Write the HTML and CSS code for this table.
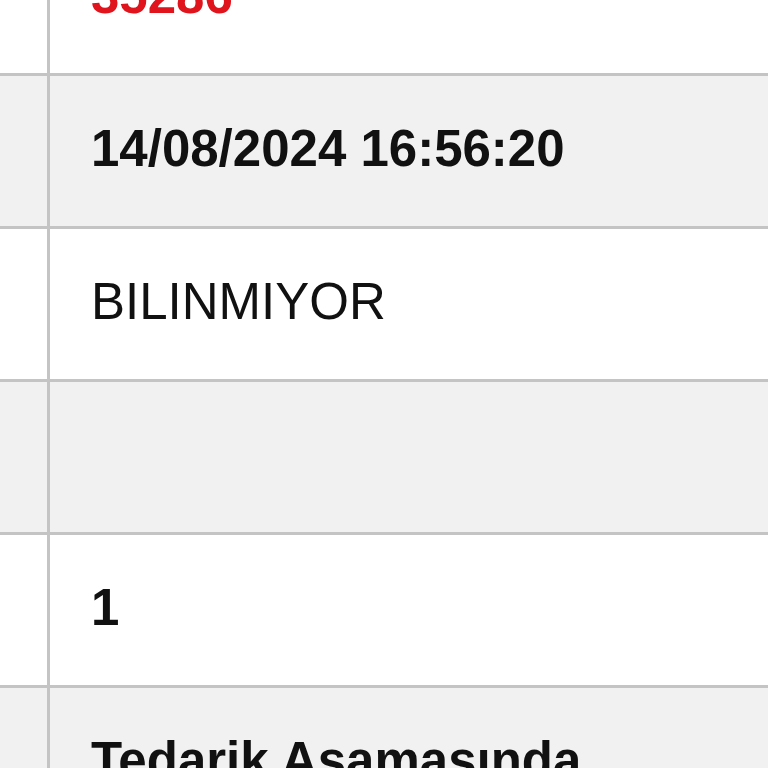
FILE: index.html
```html
<!DOCTYPE html>
<html lang="tr">
<head>
<meta charset="utf-8">
<title>Detay</title>
<link rel="stylesheet" href="styles.css">
</head>
<body>
<div class="table">
  <div class="row">
    <div class="label"></div>
    <div class="value red">35286</div>
  </div>
  <div class="row alt">
    <div class="label"></div>
    <div class="value bold">14/08/2024 16:56:20</div>
  </div>
  <div class="row">
    <div class="label"></div>
    <div class="value">BILINMIYOR</div>
  </div>
  <div class="row alt">
    <div class="label"></div>
    <div class="value"></div>
  </div>
  <div class="row">
    <div class="label"></div>
    <div class="value bold">1</div>
  </div>
  <div class="row alt">
    <div class="label"></div>
    <div class="value bold">Tedarik Aşamasında</div>
  </div>
</div>
</body>
</html>
```
FILE: styles.css
```css
html, body {
  margin: 0;
  padding: 0;
  background: #ffffff;
  overflow: hidden;
}
body {
  font-family: "Liberation Sans", Arial, sans-serif;
  font-size: 51px;
  color: #111111;
}
.table {
  margin-top: -77px;
  display: flex;
  flex-direction: column;
}
.row {
  display: grid;
  grid-template-columns: 50px 1fr;
  height: 150px;
  border-bottom: 3px solid #c4c4c4;
  background: #ffffff;
}
.row.alt {
  background: #f1f1f1;
}
.label {
  border-right: 3px solid #c4c4c4;
}
.value {
  display: flex;
  align-items: center;
  padding-left: 41px;
  padding-bottom: 5px;
  white-space: nowrap;
}
.bold {
  font-weight: bold;
}
.red {
  color: #e0141c;
  font-weight: bold;
}
```
